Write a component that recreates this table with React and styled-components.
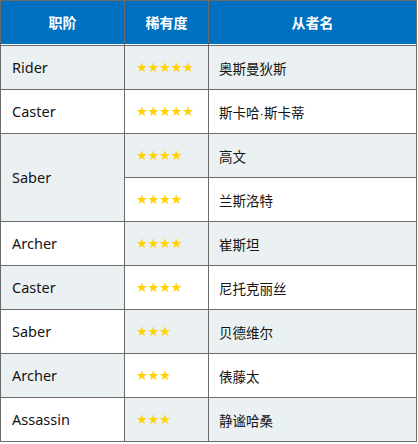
import styled, { createGlobalStyle } from 'styled-components'

const GlobalStyle = createGlobalStyle`
	body {
		margin: 0;
		background: #ffffff;
		font-family: "Noto Sans", "Noto Sans CJK SC", sans-serif;
	}
`;

const Table = styled.div`
	display: grid;
	grid-template-columns: 124px 84px 208px;
	grid-template-rows: 45px;
	grid-auto-rows: 44px;
	width: 417px;
	box-sizing: border-box;
	border-left: 1px solid #6b6b6b;
	border-top: 1px solid #6b6b6b;
`;

const HeadCell = styled.div`
	display: flex;
	align-items: center;
	justify-content: center;
	box-sizing: border-box;
	background: #0070c0;
	color: #ffffff;
	font-family: "Noto Sans CJK SC", sans-serif;
	font-size: 14px;
	font-weight: bold;
	border-right: 1px solid #6b6b6b;
	border-bottom: 1px solid #6b6b6b;
	box-shadow: inset 0 -1px 0 #ffffff;
	padding-bottom: 2px;
`;

const Cell = styled.div`
	display: flex;
	align-items: center;
	box-sizing: border-box;
	padding-left: ${p => p.$pad || 11}px;
	background: ${p => (p.$shade ? '#ebf0f2' : '#ffffff')};
	color: #141414;
	font-size: 14px;
	border-right: 1px solid #6b6b6b;
	border-bottom: 1px solid #6b6b6b;
	grid-row: span ${p => p.$span || 1};
`;

const ClassName = styled.span`
	font-family: "Noto Sans", sans-serif;
	font-size: 14.5px;
	padding-bottom: 1px;
`;

const ServantName = styled.span`
	font-family: "Liberation Sans", "Noto Sans CJK SC", sans-serif;
	font-size: 13.5px;
`;

const Stars = styled.span`
	font-family: "DejaVu Sans", sans-serif;
	font-size: 13.5px;
	line-height: 1;
	color: #ffd200;
	letter-spacing: -0.6px;
`;

const groups = [
	{ cls: 'Rider', list: [{ stars: 5, name: '奥斯曼狄斯' }] },
	{ cls: 'Caster', list: [{ stars: 5, name: '斯卡哈·斯卡蒂' }] },
	{ cls: 'Saber', list: [{ stars: 4, name: '高文' }, { stars: 4, name: '兰斯洛特' }] },
	{ cls: 'Archer', list: [{ stars: 4, name: '崔斯坦' }] },
	{ cls: 'Caster', list: [{ stars: 4, name: '尼托克丽丝' }] },
	{ cls: 'Saber', list: [{ stars: 3, name: '贝德维尔' }] },
	{ cls: 'Archer', list: [{ stars: 3, name: '俵藤太' }] },
	{ cls: 'Assassin', list: [{ stars: 3, name: '静谧哈桑' }] },
];

const App = () => {
	let row = 0
	const cells = []
	groups.forEach((g, gi) => {
		g.list.forEach((s, si) => {
			const shade = row % 2 === 0
			if (si === 0) {
				cells.push(
					<Cell key={`c${row}`} $shade={gi % 2 === 0} $span={g.list.length} $pad={11}>
						<ClassName>{g.cls}</ClassName>
					</Cell>
				)
			}
			cells.push(
				<Cell key={`s${row}`} $shade={shade} $pad={11}>
					<Stars>{'★'.repeat(s.stars)}</Stars>
				</Cell>
			)
			cells.push(
				<Cell key={`n${row}`} $shade={shade} $pad={10}>
					<ServantName>{s.name}</ServantName>
				</Cell>
			)
			row++
		})
	})

	return (
		<>
			<GlobalStyle />
			<Table>
				<HeadCell>职阶</HeadCell>
				<HeadCell>稀有度</HeadCell>
				<HeadCell>从者名</HeadCell>
				{cells}
			</Table>
		</>
	)
}

export default App
